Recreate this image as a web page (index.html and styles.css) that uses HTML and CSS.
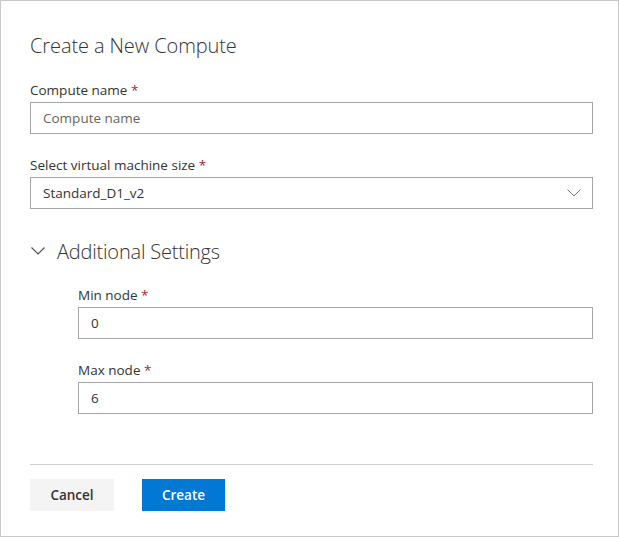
FILE: index.html
```html
<!DOCTYPE html>
<html>
<head>
<meta charset="utf-8">
<link rel="stylesheet" href="styles.css">
</head>
<body>
<div class="panel">
  <h1 class="title">Create a New Compute</h1>
  <div class="field">
    <div class="label">Compute name <span class="req">*</span></div>
    <div class="box placeholder">Compute name</div>
  </div>
  <div class="field">
    <div class="label">Select virtual machine size <span class="req">*</span></div>
    <div class="box select">
      <span>Standard_D1_v2</span>
      <svg class="chev" width="14" height="8" viewBox="0 0 14 8"><path d="M0.5 0.5 L7 7 L13.5 0.5" fill="none" stroke="#6f7c8a" stroke-width="1"/></svg>
    </div>
  </div>
  <div class="section">
    <svg class="chev-sec" width="14" height="8" viewBox="0 0 14 8"><path d="M0.5 0.5 L7 7 L13.5 0.5" fill="none" stroke="#555" stroke-width="1.2"/></svg>
    <span>Additional Settings</span>
  </div>
  <div class="sub">
    <div class="field">
      <div class="label">Min node <span class="req">*</span></div>
      <div class="box">0</div>
    </div>
    <div class="field">
      <div class="label">Max node <span class="req">*</span></div>
      <div class="box">6</div>
    </div>
  </div>
  <div class="footer">
    <button class="btn cancel">Cancel</button>
    <button class="btn create">Create</button>
  </div>
</div>
</body>
</html>
```
FILE: styles.css
```css
html, body { margin: 0; padding: 0; background: #fff; }
body { font-family: "Open Sans", "Noto Sans", sans-serif; color: #333; }
.panel {
  width: 619px; height: 537px; box-sizing: border-box;
  border: 1px solid #c8c8c8;
  padding: 31px 25px 0 29px;
  display: flex; flex-direction: column;
}
.title {
  margin: 0; font-weight: 300; font-size: 20px; line-height: 28px; color: #333;
  letter-spacing: -0.1px;
}
.field { display: flex; flex-direction: column; margin-top: 20px; }
.field + .field { margin-top: 21px; }
.label { font-size: 13.5px; line-height: 20px; margin-bottom: 2px; color: #333; }
.req { color: #a4262c; }
.box {
  height: 32px; box-sizing: border-box; border: 1px solid #a6a6a6;
  padding: 0 12px; font-size: 13.5px; line-height: 30px; color: #333;
}
.placeholder { color: #666; }
.select { display: flex; align-items: center; justify-content: space-between; padding-right: 11px; }
.section {
  display: flex; align-items: center; margin-top: 28px; height: 28px;
  font-size: 20px; font-weight: 300; color: #333; letter-spacing: -0.2px;
}
.chev-sec { margin: 0 12px 0 1px; }
.sub { padding-left: 48px; display: flex; flex-direction: column; }
.sub .field:first-child { margin-top: 20px; }
.footer {
  margin-top: 50px; border-top: 1px solid #d0d0d0; padding-top: 14px;
  display: flex; gap: 28px;
}
.btn {
  height: 32px; width: 84px; border: none; font-family: inherit;
  font-size: 13.5px; font-weight: 600; padding: 0;
}
.cancel { background: #f4f4f4; color: #333; }
.create { background: #0078d4; color: #fff; width: 83px; }
```
